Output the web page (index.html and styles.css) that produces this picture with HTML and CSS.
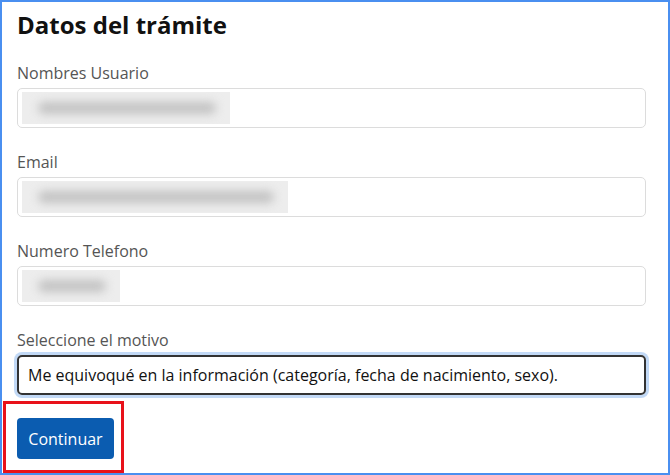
FILE: index.html
```html
<!DOCTYPE html>
<html lang="es">
<head>
<meta charset="utf-8">
<title>Datos del trámite</title>
<link rel="stylesheet" href="styles.css">
</head>
<body>
<div class="frame">
  <h1 class="title">Datos del trámite</h1>
  <div class="field">
    <label class="label">Nombres Usuario</label>
    <div class="input"><span class="blur" style="width:208px"></span></div>
  </div>
  <div class="field">
    <label class="label">Email</label>
    <div class="input"><span class="blur" style="width:266px"></span></div>
  </div>
  <div class="field">
    <label class="label">Numero Telefono</label>
    <div class="input"><span class="blur" style="width:98px"></span></div>
  </div>
  <div class="field">
    <label class="label">Seleccione el motivo</label>
    <div class="select">Me equivoqué en la información (categoría, fecha de nacimiento, sexo).</div>
  </div>
  <div class="actions">
    <button class="btn" type="button">Continuar</button>
  </div>
  <div class="highlight"></div>
</div>
</body>
</html>
```
FILE: styles.css
```css
* { box-sizing: border-box; }
html, body { margin: 0; padding: 0; background: #fff; }
body { font-family: "Open Sans", "Liberation Sans", sans-serif; }
.frame {
  position: relative;
  width: 670px;
  height: 475px;
  border: 2px solid #4a8ff0;
  padding: 8px 22px 0 15px;
  overflow: hidden;
}
.title {
  margin: 0;
  font-size: 24px;
  line-height: 30px;
  font-weight: 700;
  color: #111;
}
.field { margin-top: 23px; }
.field + .field { margin-top: 24px; }
.label {
  display: block;
  font-size: 16px;
  line-height: 20px;
  color: #555;
}
.input {
  margin-top: 5px;
  height: 40px;
  border: 1px solid #dcdcdc;
  border-radius: 5px;
  padding: 3px 4px;
  display: flex;
  align-items: stretch;
  overflow: hidden;
}
.blur {
  display: block;
  background: #ededed;
  position: relative;
  overflow: hidden;
}
.blur::after {
  content: "";
  position: absolute;
  left: 16px; right: 14px; top: 10px; height: 12px;
  background: #c2c2c2;
  filter: blur(5px);
  border-radius: 6px;
}
.select {
  margin-top: 5px;
  height: 40px;
  border: 2px solid #333;
  border-radius: 5px;
  box-shadow: 0 0 0 3px rgba(120, 170, 235, 0.45);
  padding: 0 9px;
  display: flex;
  align-items: center;
  font-size: 16px;
  color: #111;
}
.actions { margin-top: 23px; }
.btn {
  width: 97px;
  height: 41px;
  border: 0;
  border-radius: 4px;
  background: #0b5cb0;
  color: #fff;
  font-family: inherit;
  font-size: 16px;
  padding: 0;
}
.highlight {
  position: absolute;
  left: 1px;
  top: 399px;
  width: 121px;
  height: 72px;
  border: 3px solid #e8111a;
  pointer-events: none;
}
```
